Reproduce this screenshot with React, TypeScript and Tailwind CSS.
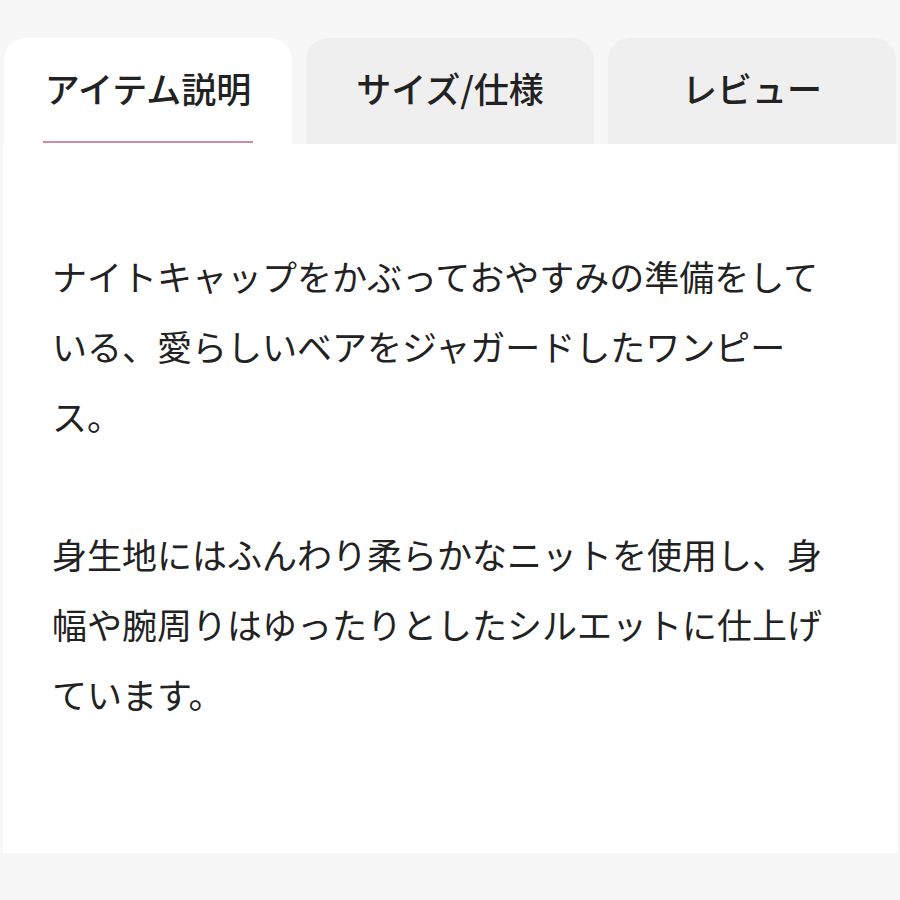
import React from "react";

export default function App() {
  const font = { fontFamily: '"Noto Sans CJK JP", "Noto Sans", sans-serif' };
  return (
    <div className="w-[900px] h-[900px] bg-[#f7f7f7] overflow-hidden" style={font}>
      <div className="pt-[38px] px-[3px]">
        <div className="flex gap-[14px] px-[1px]">
          <div className="flex-1 h-[106px] bg-white rounded-t-[22px] flex flex-col items-center relative">
            <div className="h-[100px] flex items-center justify-center text-[35px] font-medium text-[#222]">
              アイテム説明
            </div>
            <div className="absolute left-[39px] right-[39px] top-[103px] h-[2px] bg-[#cf8ea0]" />
          </div>
          <div className="flex-1 h-[106px] bg-[#efefef] rounded-t-[22px] flex items-start justify-center">
            <div className="h-[100px] flex items-center text-[35px] font-medium text-[#222]">サイズ/仕様</div>
          </div>
          <div className="flex-1 h-[106px] bg-[#efefef] rounded-t-[22px] flex items-start justify-center">
            <div className="h-[100px] flex items-center text-[35px] font-medium text-[#222]">レビュー</div>
          </div>
        </div>
        <div className="bg-white h-[709px] pl-[49px] pt-[97px]">
          <div className="w-[784px] text-[35px] leading-[70px] text-[#222]">
            <p>ナイトキャップをかぶっておやすみの準備をしている、愛らしいベアをジャガードしたワンピース。</p>
            <p className="mt-[68px]">身生地にはふんわり柔らかなニットを使用し、身幅や腕周りはゆったりとしたシルエットに仕上げています。</p>
          </div>
        </div>
      </div>
    </div>
  );
}
